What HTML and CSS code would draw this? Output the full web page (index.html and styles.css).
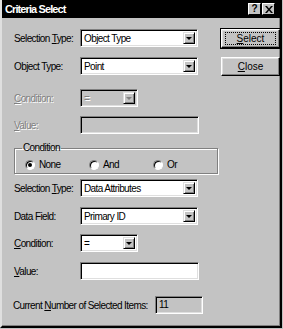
FILE: index.html
```html
<!DOCTYPE html>
<html lang="en">
<head>
  <meta charset="UTF-8">
  <title>Criteria Select</title>
  <link rel="stylesheet" href="styles.css">
</head>
<body>
  <div class="window">
    <div class="titlebar">
      <span class="title">Criteria Select</span>
      <div class="caption-buttons">
        <span class="cap-btn help">?</span>
        <span class="cap-btn close">
          <svg width="8" height="7" viewBox="0 0 8 7"><path d="M0 0h2l2 2.5L6 0h2L5 3.5 8 7H6L4 4.5 2 7H0l3-3.5z" fill="#000"/></svg>
        </span>
      </div>
    </div>

    <div class="client">
      <div class="form">
        <div class="row">
          <label>Selection <u>T</u>ype:</label>
          <div class="combo"><span class="value">Object Type</span><span class="drop"></span></div>
        </div>
        <div class="row spaced">
          <label>Object Type:</label>
          <div class="combo"><span class="value">Point</span><span class="drop"></span></div>
        </div>
        <div class="row disabled tight">
          <label><u>C</u>ondition:</label>
          <div class="combo short"><span class="value">=</span><span class="drop"></span></div>
        </div>
        <div class="row disabled tight">
          <label><u>V</u>alue:</label>
          <div class="field wide"></div>
        </div>

        <fieldset class="group">
          <legend>Condition</legend>
          <div class="radios">
            <span class="radio checked"><i></i>None</span>
            <span class="radio"><i></i>And</span>
            <span class="radio"><i></i>Or</span>
          </div>
        </fieldset>

        <div class="row">
          <label>Selection <u>T</u>ype:</label>
          <div class="combo"><span class="value">Data Attributes</span><span class="drop"></span></div>
        </div>
        <div class="row tight">
          <label>Data Field:</label>
          <div class="combo"><span class="value">Primary ID</span><span class="drop"></span></div>
        </div>
        <div class="row">
          <label><u>C</u>ondition:</label>
          <div class="combo short"><span class="value">=</span><span class="drop"></span></div>
        </div>
        <div class="row wide-gap">
          <label><u>V</u>alue:</label>
          <div class="field wide white"></div>
        </div>
        <div class="row count">
          <label>Current <u>N</u>umber of Selected Items:</label>
          <div class="field small">11</div>
        </div>
      </div>

      <div class="actions">
        <button class="btn default"><span class="focus"><u>S</u>elect</span></button>
        <button class="btn"><span><u>C</u>lose</span></button>
      </div>
    </div>
  </div>
</body>
</html>
```

FILE: styles.css
```css
* {
  box-sizing: border-box;
}

body {
  margin: 0;
  background: #c0c0c0;
  font-family: "Liberation Sans", Arial, sans-serif;
  font-size: 10px;
  letter-spacing: -0.6px;
  color: #000;
}

.window {
  width: 282px;
  height: 328px;
  background: #c3c3c3;
  border-left: 2px solid #dfdfdf;
  border-right: 2px solid #000;
  border-bottom: 2px solid #000;
  box-shadow: inset -1px -1px #808080;
}

.titlebar {
  height: 18px;
  background: #000;
  display: flex;
  align-items: center;
  justify-content: space-between;
  padding: 0 5px 0 3px;
}

.title {
  color: #fff;
  font-weight: bold;
  font-size: 11px;
  letter-spacing: -0.9px;
}

.caption-buttons {
  display: flex;
  gap: 1px;
}

.cap-btn {
  width: 13px;
  height: 12px;
  background: #c3c3c3;
  border: 1px solid;
  border-color: #fff #000 #000 #fff;
  display: flex;
  align-items: center;
  justify-content: center;
  font-weight: bold;
  font-size: 10px;
  letter-spacing: 0;
  line-height: 1;
}

.client {
  display: flex;
  padding: 11px 0 0 10px;
}

.form {
  width: 200px;
}

/* rows: label column + control */
.row {
  display: flex;
  align-items: center;
  height: 18px;
  margin-bottom: 10px;
}

.row.spaced {
  margin-bottom: 14px;
}

.row.wide-gap {
  margin-bottom: 16px;
}

.row.tight {
  margin-bottom: 9px;
}

.row label {
  width: 68px;
  padding-left: 2px;
}

.row.disabled label,
.row.disabled .value {
  color: #808080;
  text-shadow: 1px 1px #fff;
}

.combo {
  width: 118px;
  height: 18px;
  background: #fff;
  border: 1px solid;
  border-color: #808080 #fff #fff #808080;
  box-shadow: inset 1px 1px #000, inset -1px -1px #dfdfdf;
  display: flex;
  align-items: center;
  padding: 2px 2px 2px 3px;
}

.combo.short {
  width: 58px;
}

.disabled .combo {
  background: #c3c3c3;
}

.combo .value {
  flex: 1;
}

.drop {
  width: 12px;
  height: 12px;
  background: #c3c3c3;
  border: 1px solid;
  border-color: #dfdfdf #000 #000 #dfdfdf;
  box-shadow: inset 1px 1px #fff, inset -1px -1px #808080;
  display: flex;
  align-items: center;
  justify-content: center;
}

.drop::after {
  content: "";
  border-left: 3px solid transparent;
  border-right: 3px solid transparent;
  border-top: 3px solid #000;
}

.disabled .drop::after {
  border-top-color: #808080;
}

.field {
  height: 18px;
  background: #c3c3c3;
  border: 1px solid;
  border-color: #808080 #fff #fff #808080;
  box-shadow: inset 1px 1px #000, inset -1px -1px #dfdfdf;
  padding: 2px 3px;
}

.field.wide {
  width: 119px;
}

.field.white {
  background: #fff;
}

.field.small {
  width: 48px;
  height: 18px;
}

.row.count label {
  width: 143px;
  padding-left: 1px;
}

.group {
  margin: 0 0 5px 2px;
  width: 188px;
  height: 31px;
  padding: 0 0 0 10px;
  border: 1px solid #808080;
  box-shadow: inset 1px 1px #fff, 1px 1px #fff;
}

.group legend {
  padding: 0 1px;
  margin-left: -3px;
  line-height: 10px;
}

.radios {
  display: flex;
  padding-top: 6px;
}

.radio {
  width: 64px;
  display: flex;
  align-items: center;
  gap: 4px;
}

.radio i {
  width: 10px;
  height: 10px;
  border-radius: 50%;
  background: #fff;
  border: 1px solid;
  border-color: #808080 #fff #fff #808080;
  box-shadow: inset 1px 1px #000;
  display: flex;
  align-items: center;
  justify-content: center;
}

.radio.checked i::after {
  content: "";
  width: 4px;
  height: 4px;
  border-radius: 50%;
  background: #000;
}

.actions {
  display: flex;
  flex-direction: column;
  gap: 9px;
  margin-left: 9px;
}

.btn {
  width: 59px;
  height: 19px;
  padding: 0;
  font: inherit;
  background: #c3c3c3;
  border: 1px solid;
  border-color: #fff #000 #000 #fff;
  box-shadow: inset -1px -1px #808080, inset 1px 1px #dfdfdf;
  display: flex;
  align-items: center;
  justify-content: center;
}

.btn.default {
  outline: 1px solid #000;
}

.btn .focus {
  width: 51px;
  height: 13px;
  border: 1px dotted #000;
  display: flex;
  align-items: center;
  justify-content: center;
}
```
